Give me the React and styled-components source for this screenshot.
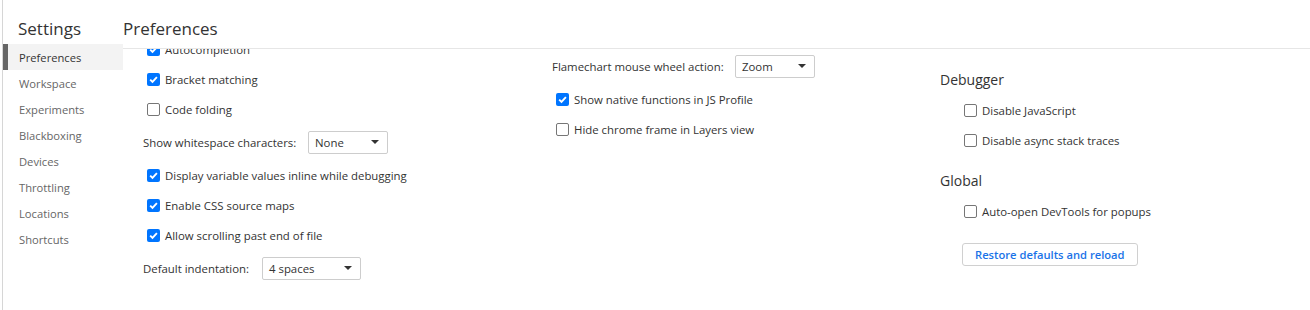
import styled, { createGlobalStyle } from 'styled-components';

const GlobalStyle = createGlobalStyle`
  html, body {
    margin: 0;
    padding: 0;
    background: #fff;
  }
  body {
    font-family: "Open Sans", "Noto Sans", sans-serif;
    color: #333;
  }
`;

const sidebarItems = [
  'Preferences',
  'Workspace',
  'Experiments',
  'Blackboxing',
  'Devices',
  'Throttling',
  'Locations',
  'Shortcuts',
];

const Check = ({ checked }) => (
  <CheckBox $checked={checked}>
    {checked && (
      <svg width="11" height="11" viewBox="0 0 11 11">
        <path d="M2.2 5.6 L4.5 7.9 L8.9 3.2" fill="none" stroke="#fff" strokeWidth="1.9" />
      </svg>
    )}
  </CheckBox>
);

const CheckRow = ({ checked, children }) => (
  <Row>
    <Check checked={checked} />
    <CheckLabel>{children}</CheckLabel>
  </Row>
);

const SelectRow = ({ label, value, width, gap }) => (
  <SelRow>
    <SelLabel $gap={gap}>{label}</SelLabel>
    <Select $width={width}>
      <span>{value}</span>
      <Arrow />
    </Select>
  </SelRow>
);

const App = () => {
  return (
    <>
      <GlobalStyle />
      <Page>
        <Edge />
        <Sidebar>
          <Title>Settings</Title>
          {sidebarItems.map((item, i) => (
            <NavItem key={item} $active={i === 0}>{item}</NavItem>
          ))}
        </Sidebar>
        <Main>
          <Header>Preferences</Header>
          <Content>
            <Column $width={409} $top={-15}>
              <CheckRow checked>Autocompletion</CheckRow>
              <CheckRow checked>Bracket matching</CheckRow>
              <CheckRow>Code folding</CheckRow>
              <SelectRow label="Show whitespace characters:" value="None" width={80} gap={165} />
              <CheckRow checked>Display variable values inline while debugging</CheckRow>
              <CheckRow checked>Enable CSS source maps</CheckRow>
              <CheckRow checked>Allow scrolling past end of file</CheckRow>
              <SelectRow label="Default indentation:" value="4 spaces" width={99} gap={119} />
            </Column>
            <Column $width={388} $top={-1}>
              <SelectRow label="Flamechart mouse wheel action:" value="Zoom" width={80} gap={183} />
              <CheckRow checked>Show native functions in JS Profile</CheckRow>
              <CheckRow>Hide chrome frame in Layers view</CheckRow>
            </Column>
            <Column $top={15}>
              <Section>
                <SectionTitle>Debugger</SectionTitle>
                <SectionBody>
                  <CheckRow>Disable JavaScript</CheckRow>
                  <CheckRow>Disable async stack traces</CheckRow>
                </SectionBody>
              </Section>
              <Section>
                <SectionTitle>Global</SectionTitle>
                <SectionBody>
                  <CheckRow>Auto-open DevTools for popups</CheckRow>
                  <ResetButton>Restore defaults and reload</ResetButton>
                </SectionBody>
              </Section>
            </Column>
          </Content>
        </Main>
      </Page>
    </>
  );
};

export default App;

const Page = styled.div`
  display: flex;
  width: 1310px;
  height: 310px;
  overflow: hidden;
`;

const Edge = styled.div`
  width: 2px;
  flex: none;
  border-right: 1px solid #d6d6d6;
`;

const Sidebar = styled.div`
  width: 120px;
  flex: none;
  display: flex;
  flex-direction: column;
`;

const Title = styled.div`
  height: 44px;
  box-sizing: border-box;
  padding: 18px 0 0 15px;
  font-size: 17px;
  line-height: 22px;
  color: #333;
`;

const NavItem = styled.div`
  height: 26px;
  display: flex;
  align-items: center;
  box-sizing: border-box;
  padding-left: ${(p) => (p.$active ? '11px' : '16px')};
  border-left: ${(p) => (p.$active ? '5px solid #666' : 'none')};
  background: ${(p) => (p.$active ? '#f3f3f3' : 'transparent')};
  color: ${(p) => (p.$active ? '#333' : '#666')};
  font-size: 11.2px;
`;

const Main = styled.div`
  flex: 1;
  display: flex;
  flex-direction: column;
  min-width: 0;
`;

const Header = styled.div`
  height: 49px;
  flex: none;
  box-sizing: border-box;
  padding-top: 18px;
  border-bottom: 1px solid #e6e6e6;
  font-size: 17px;
  line-height: 22px;
  color: #333;
`;

const Content = styled.div`
  flex: 1;
  display: flex;
  overflow: hidden;
  padding-left: 20px;
`;

const Column = styled.div`
  width: ${(p) => (p.$width ? `${p.$width}px` : 'auto')};
  flex: none;
  display: flex;
  flex-direction: column;
  margin-top: ${(p) => p.$top}px;
`;

const Row = styled.div`
  height: 30px;
  display: flex;
  align-items: center;
  padding-left: 4px;
  flex: none;
`;

const CheckBox = styled.span`
  width: 13px;
  height: 13px;
  box-sizing: border-box;
  border-radius: 2px;
  display: inline-flex;
  align-items: center;
  justify-content: center;
  flex: none;
  background: ${(p) => (p.$checked ? '#0075ff' : '#fff')};
  border: ${(p) => (p.$checked ? 'none' : '1px solid #767676')};
`;

const CheckLabel = styled.span`
  margin-left: 5px;
  font-size: 11.4px;
  color: #333;
  white-space: nowrap;
`;

const SelRow = styled.div`
  height: 36px;
  display: flex;
  align-items: center;
  flex: none;
`;

const SelLabel = styled.span`
  width: ${(p) => p.$gap}px;
  font-size: 11.4px;
  color: #333;
  white-space: nowrap;
`;

const Select = styled.div`
  width: ${(p) => p.$width}px;
  height: 23px;
  box-sizing: border-box;
  border: 1px solid #cdcdcd;
  border-radius: 2px;
  display: flex;
  align-items: center;
  justify-content: space-between;
  padding: 0 8px 0 6px;
  font-size: 11.4px;
  color: #333;
  background: #fff;
`;

const Arrow = styled.span`
  width: 0;
  height: 0;
  border-left: 4px solid transparent;
  border-right: 4px solid transparent;
  border-top: 4px solid #333;
`;

const Section = styled.div`
  display: flex;
  flex-direction: column;
  margin-bottom: 10px;
`;

const SectionTitle = styled.div`
  height: 30px;
  display: flex;
  align-items: center;
  font-size: 14px;
  color: #333;
`;

const SectionBody = styled.div`
  display: flex;
  flex-direction: column;
  padding: 1px 0 0 20px;
`;

const ResetButton = styled.button`
  align-self: flex-start;
  margin: 17px 0 0 2px;
  height: 23px;
  padding: 0 12px;
  border: 1px solid #d0d0d0;
  border-radius: 3px;
  background: #fff;
  color: #1a73e8;
  font-family: inherit;
  font-size: 11.2px;
  font-weight: 600;
  cursor: pointer;
`;
